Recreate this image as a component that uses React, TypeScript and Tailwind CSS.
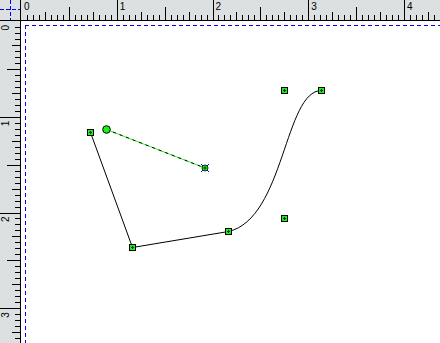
import React from "react";

const PPI = 95.75;
const STEP = PPI / 16;

function tickLen(i: number) {
  if (i % 16 === 0) return 20;
  if (i % 8 === 0) return 13;
  if (i % 4 === 0) return 8;
  return 5;
}

const labelFont = { fontFamily: '"Liberation Sans", Arial, sans-serif', fontSize: 10 };

function TopRuler() {
  const ticks = Array.from({ length: 71 }, (_, i) => i).filter((i) => i > 0);
  return (
    <svg width={419} height={20} shapeRendering="crispEdges" className="block">
      {ticks.map((i) => {
        const x = Math.round(i * STEP) + 0.5;
        return <line key={i} x1={x} x2={x} y1={20 - tickLen(i)} y2={20} stroke="#000" />;
      })}
      {[0, 1, 2, 3, 4].map((n) => (
        <text key={n} x={n * PPI + 3} y={9.7} fill="#000" style={labelFont}>
          {n}
        </text>
      ))}
    </svg>
  );
}

function LeftRuler() {
  const ticks = Array.from({ length: 54 }, (_, i) => i).filter((i) => i > 0);
  return (
    <svg width={20} height={322} shapeRendering="crispEdges" className="block">
      {ticks.map((i) => {
        const y = Math.round(i * STEP) + 0.5;
        return <line key={i} x1={20 - tickLen(i)} x2={20} y1={y} y2={y} stroke="#000" />;
      })}
      {[0, 1, 2, 3].map((n) => {
        const y = n * PPI + 9.5;
        return (
          <text key={n} x={8.5} y={y} transform={`rotate(-90 8.5 ${y})`} fill="#000" style={labelFont}>
            {n}
          </text>
        );
      })}
    </svg>
  );
}

function Node({ x, y }: { x: number; y: number }) {
  return (
    <g shapeRendering="crispEdges">
      <rect x={x - 3} y={y - 3} width={6} height={6} fill="#19f019" stroke="#000" />
      <path d={`M${x - 1.5} ${y} H${x + 1.5} M${x} ${y - 1.5} V${y + 1.5}`} stroke="#003300" />
    </g>
  );
}

// margin guides drawn as individual blue dashes
function Guides() {
  const h = Array.from({ length: 60 }, (_, i) => 4 + i * 7).filter((x) => x < 419);
  const v = Array.from({ length: 47 }, (_, i) => 4 + i * 7).filter((y) => y < 322);
  return (
    <g fill="#0000ff" shapeRendering="crispEdges">
      {h.map((x) => (
        <rect key={`h${x}`} x={x} y={4} width={4} height={1} />
      ))}
      {v.map((y) => (
        <rect key={`v${y}`} x={4} y={y} width={1} height={4} />
      ))}
    </g>
  );
}

function Canvas() {
  const A = [69.5, 111.5];
  const B = [111.5, 226.5];
  const C = [207.5, 210.5];
  const H1 = [263.5, 197.5];
  const H2 = [263.5, 69.5];
  const D = [300.5, 69.5];
  const S = [85.5, 108.5];
  const E = [184, 147];
  return (
    <svg width={419} height={322} className="block">
      <Guides />

      <path
        d={`M${A[0]} ${A[1]} L${B[0]} ${B[1]} L${C[0]} ${C[1]} C${H1[0]} ${H1[1]} ${H2[0]} ${H2[1]} ${D[0]} ${D[1]}`}
        fill="none"
        stroke="#000"
        strokeWidth={1}
      />

      {/* guide line */}
      <line x1={S[0]} y1={S[1]} x2={E[0]} y2={E[1]} stroke="#22ee22" strokeWidth={1} />
      <line x1={S[0]} y1={S[1]} x2={E[0]} y2={E[1]} stroke="#000" strokeWidth={1} strokeDasharray="3 4" />
      <circle cx={S[0]} cy={S[1]} r={3.8} fill="#19f019" stroke="#000" />

      <g stroke="#0000ff" strokeWidth={1}>
        <line x1={E[0] - 4} y1={E[1] - 4} x2={E[0] + 4} y2={E[1] + 4} />
        <line x1={E[0] + 4} y1={E[1] - 4} x2={E[0] - 4} y2={E[1] + 4} />
      </g>
      <circle cx={E[0]} cy={E[1]} r={3} fill="#19f019" stroke="#000" strokeWidth={0.8} />
      <path d={`M${E[0] - 1.5} ${E[1]} H${E[0] + 1.5} M${E[0]} ${E[1] - 1.5} V${E[1] + 1.5}`} stroke="#003300" />

      <Node x={A[0]} y={A[1]} />
      <Node x={B[0]} y={B[1]} />
      <Node x={C[0]} y={C[1]} />
      <Node x={H1[0]} y={H1[1]} />
      <Node x={H2[0]} y={H2[1]} />
      <Node x={D[0]} y={D[1]} />
    </svg>
  );
}

export default function App() {
  return (
    <div className="grid h-[343px] w-[440px] grid-cols-[21px_419px] grid-rows-[21px_322px] overflow-hidden bg-white">
      <div className="border-b border-r border-black bg-[#dce0e0]">
        <svg width={20} height={20} className="block" shapeRendering="crispEdges">
          <line x1={0} x2={20} y1={9.5} y2={9.5} stroke="#0000ff" strokeDasharray="4 2" />
          <line x1={10.5} x2={10.5} y1={0} y2={20} stroke="#0000ff" strokeDasharray="4 2" />
        </svg>
      </div>
      <div className="border-b border-black bg-[#dce0e0]">
        <TopRuler />
      </div>
      <div className="border-r border-black bg-[#dce0e0]">
        <LeftRuler />
      </div>
      <div className="bg-white">
        <Canvas />
      </div>
    </div>
  );
}
